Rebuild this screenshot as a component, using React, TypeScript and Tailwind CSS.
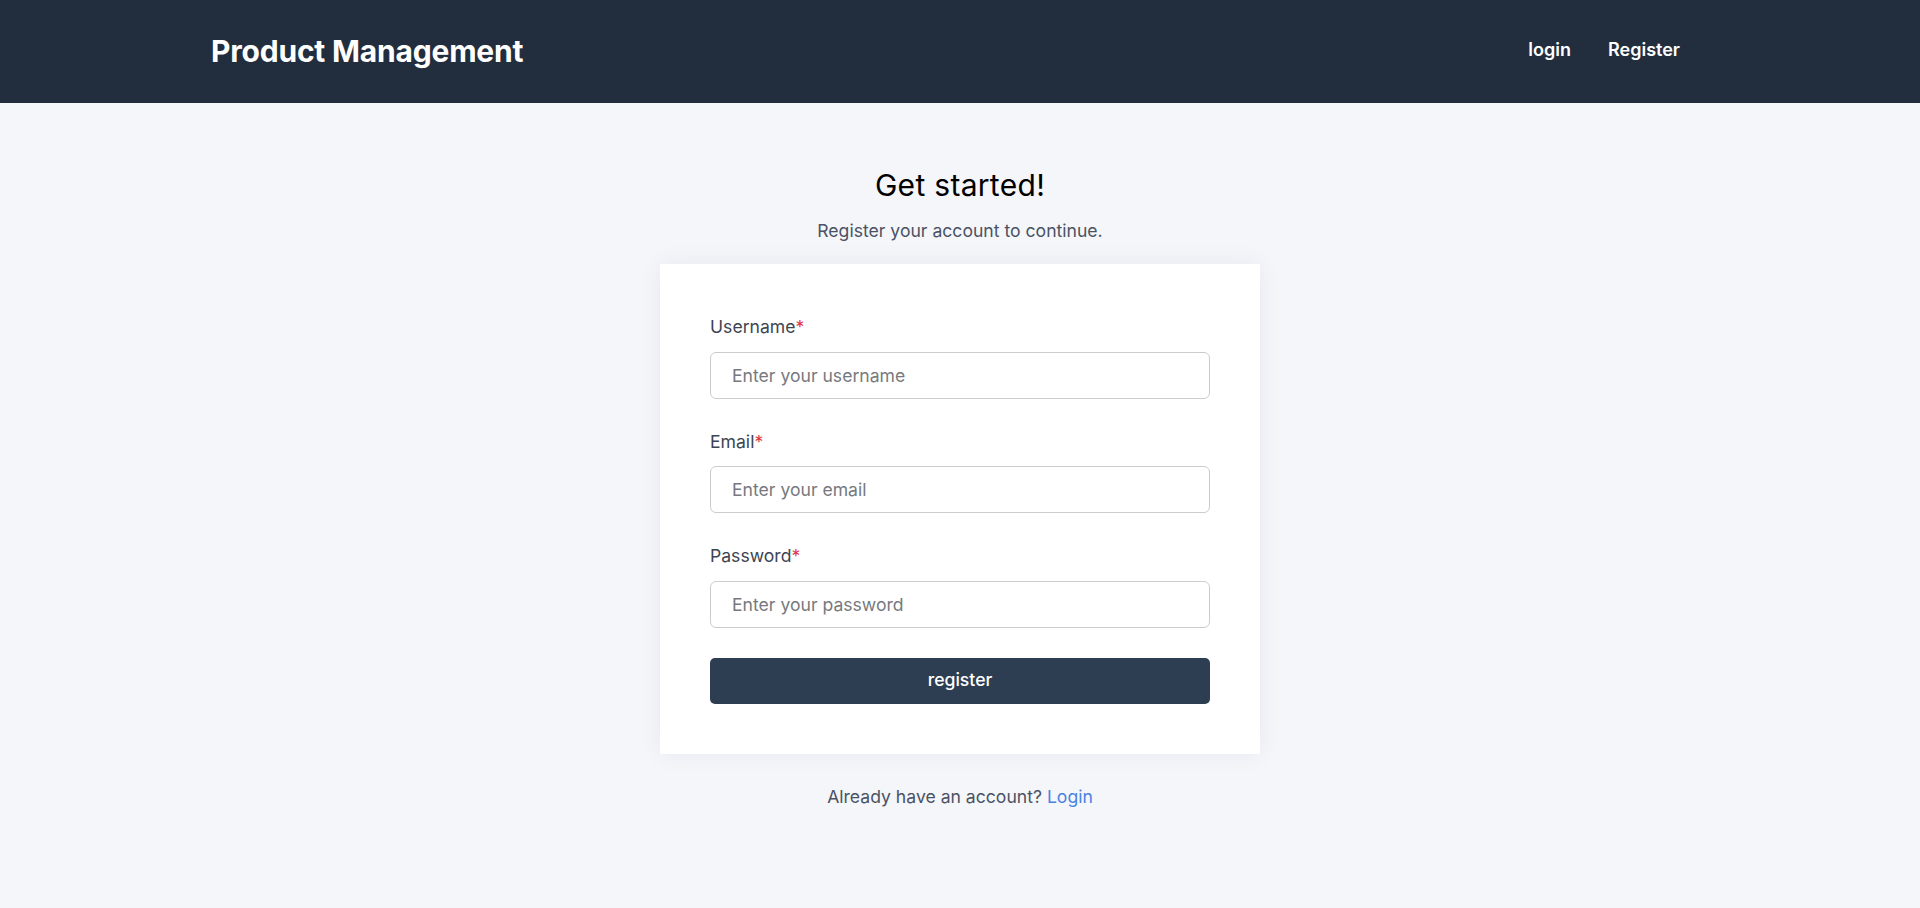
import { useState } from 'react';

const fields = [
  { name: 'username', label: 'Username', type: 'text', placeholder: 'Enter your username' },
  { name: 'email', label: 'Email', type: 'email', placeholder: 'Enter your email' },
  { name: 'password', label: 'Password', type: 'password', placeholder: 'Enter your password' },
];

const App = () => {
  const [values, setValues] = useState<Record<string, string>>({ username: '', email: '', password: '' });

  return (
    <div className="min-h-screen bg-[#f5f6fa] font-['Inter','Noto_Sans',sans-serif]">
      {/* Navbar */}
      <header className="h-[103px] bg-[#222e3d] flex items-center justify-between pl-[211px] pr-[240px]">
        <h1 className="text-[30px] font-bold text-white tracking-[-0.2px]">Product Management</h1>
        <nav className="flex items-center gap-[37px] pb-[4px] text-[18px] font-semibold text-white">
          <a href="#">login</a>
          <a href="#">Register</a>
        </nav>
      </header>

      <main className="flex flex-col items-center pt-[61px]">
        <h2 className="text-[30px] leading-[42px] tracking-[0.3px] text-black">Get started!</h2>
        <p className="mt-[12px] text-[17.6px] leading-[26.4px] text-[#4a5263]">Register your account to continue.</p>

        {/* Card */}
        <div className="mt-[20px] w-[600px] bg-white p-[50px] shadow-[0_0_24px_rgba(30,40,80,0.06)]">
          <form className="flex flex-col gap-[30px]" onSubmit={(e) => e.preventDefault()}>
            {fields.map((f) => (
              <div key={f.name} className="flex flex-col gap-[11px]">
                <label className="text-[17.6px] leading-[26.4px] text-[#3d4452]">
                  {f.label}
                  <span className="text-[#e0343f]">*</span>
                </label>
                <input
                  type={f.type}
                  name={f.name}
                  placeholder={f.placeholder}
                  value={values[f.name]}
                  onChange={(e) => setValues({ ...values, [f.name]: e.target.value })}
                  className="h-[47px] w-full rounded-[6px] border border-[#cccccc] bg-white px-[21px] text-[17.6px] text-[#333] placeholder:text-[#77797e] outline-none"
                />
              </div>
            ))}
            <button
              type="submit"
              className="h-[46px] w-full rounded-[5px] bg-[#2d3d52] text-[17.6px] font-medium text-white"
            >
              register
            </button>
          </form>
        </div>

        <p className="mt-[30px] text-[17.6px] leading-[26.4px] text-[#4a5263]">
          Already have an account? <a href="#" className="text-[#4a82e2]">Login</a>
        </p>
      </main>
    </div>
  );
};

export default App;
